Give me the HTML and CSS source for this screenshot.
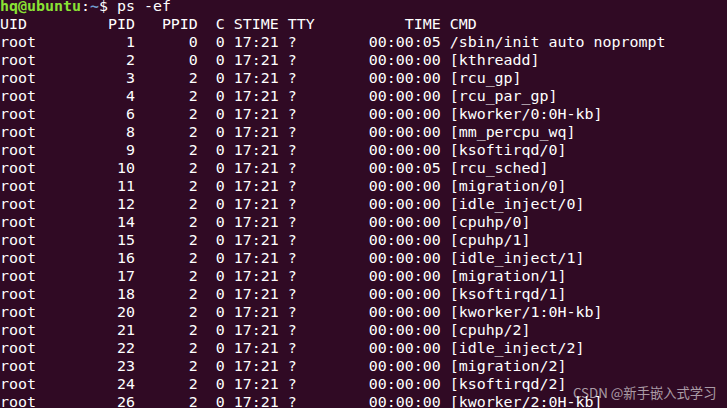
FILE: index.html
```html
<!DOCTYPE html>
<html lang="en">
<head>
<meta charset="utf-8">
<title>Terminal - ps -ef</title>
<link rel="stylesheet" href="styles.css">
</head>
<body>
<main class="terminal">
<pre class="screen"><span class="user">hq@ubuntu</span>:<span class="path">~</span>$ ps -ef
UID         PID   PPID  C STIME TTY          TIME CMD
root          1      0  0 17:21 ?        00:00:05 /sbin/init auto noprompt
root          2      0  0 17:21 ?        00:00:00 [kthreadd]
root          3      2  0 17:21 ?        00:00:00 [rcu_gp]
root          4      2  0 17:21 ?        00:00:00 [rcu_par_gp]
root          6      2  0 17:21 ?        00:00:00 [kworker/0:0H-kb]
root          8      2  0 17:21 ?        00:00:00 [mm_percpu_wq]
root          9      2  0 17:21 ?        00:00:00 [ksoftirqd/0]
root         10      2  0 17:21 ?        00:00:05 [rcu_sched]
root         11      2  0 17:21 ?        00:00:00 [migration/0]
root         12      2  0 17:21 ?        00:00:00 [idle_inject/0]
root         14      2  0 17:21 ?        00:00:00 [cpuhp/0]
root         15      2  0 17:21 ?        00:00:00 [cpuhp/1]
root         16      2  0 17:21 ?        00:00:00 [idle_inject/1]
root         17      2  0 17:21 ?        00:00:00 [migration/1]
root         18      2  0 17:21 ?        00:00:00 [ksoftirqd/1]
root         20      2  0 17:21 ?        00:00:00 [kworker/1:0H-kb]
root         21      2  0 17:21 ?        00:00:00 [cpuhp/2]
root         22      2  0 17:21 ?        00:00:00 [idle_inject/2]
root         23      2  0 17:21 ?        00:00:00 [migration/2]
root         24      2  0 17:21 ?        00:00:00 [ksoftirqd/2]
root         26      2  0 17:21 ?        00:00:00 [kworker/2:0H-kb]</pre>
<div class="watermark">CSDN @新手嵌入式学习</div>
</main>
</body>
</html>
```
FILE: styles.css
```css
html, body {
  margin: 0;
  padding: 0;
  background: #300a24;
  overflow: hidden;
}
.terminal {
  position: relative;
  width: 727px;
  height: 408px;
  overflow: hidden;
  background: #300a24;
}
.screen {
  margin: -3px 0 0 0;
  padding: 0;
  font-family: "DejaVu Sans Mono", "Liberation Mono", monospace;
  font-size: 14.95px;
  line-height: 18px;
  color: #ffffff;
  white-space: pre;
}
.user {
  color: #8ae234;
  font-weight: bold;
}
.path {
  color: #729fcf;
  font-weight: bold;
}
.watermark {
  position: absolute;
  left: 573px;
  top: 384px;
  font-family: "Noto Sans CJK SC", "Noto Sans", sans-serif;
  font-size: 13.3px;
  line-height: 18px;
  color: rgba(255, 255, 255, 0.6);
  white-space: nowrap;
}
```
